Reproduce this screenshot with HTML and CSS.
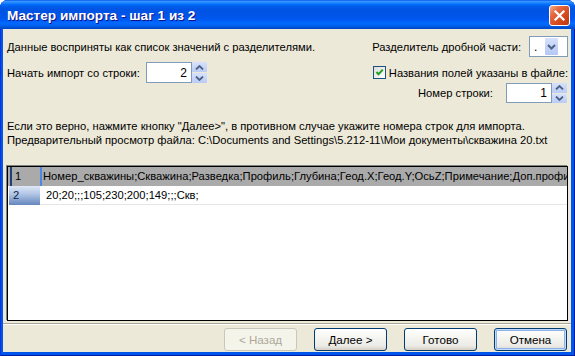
FILE: index.html
```html
<!DOCTYPE html>
<html lang="ru">

<head>
    <meta charset="UTF-8">
    <meta name="viewport" content="width=device-width, initial-scale=1.0">
    <title>Мастер импорта - шаг 1 из 2</title>
    <link rel="stylesheet" href="styles.css">
</head>

<body>
    <div class="window">
        <div class="titlebar">
            <span class="title">Мастер импорта - шаг 1 из 2</span>
            <button class="close" title="Закрыть">
                <svg width="19" height="19" viewBox="0 0 19 19">
                    <path d="M5.5 5.5 L13.5 13.5 M13.5 5.5 L5.5 13.5" stroke="#fff" stroke-width="2.2" stroke-linecap="square" fill="none"/>
                </svg>
            </button>
        </div>

        <div class="client">
            <div class="options">
                <div class="col-left">
                    <div class="row row-top">Данные восприняты как список значений с разделителями.</div>
                    <div class="row row-start">
                        <span class="start-label">Начать импорт со строки:</span>
                        <div class="spin">
                            <div class="spin-box">2</div>
                            <div class="spin-btns">
                                <span class="spin-btn"><svg width="9" height="5" viewBox="0 0 9 5"><path d="M1 4.5 L4.5 1 L8 4.5" stroke="#4d6185" stroke-width="1.8" fill="none"/></svg></span>
                                <span class="spin-btn"><svg width="9" height="5" viewBox="0 0 9 5"><path d="M1 0.5 L4.5 4 L8 0.5" stroke="#4d6185" stroke-width="1.8" fill="none"/></svg></span>
                            </div>
                        </div>
                    </div>
                </div>

                <div class="col-right">
                    <div class="row row-top">
                        <span>Разделитель дробной части:</span>
                        <div class="combo">
                            <span class="combo-value">.</span>
                            <span class="combo-btn"><svg width="9" height="6" viewBox="0 0 9 6"><path d="M1 1 L4.5 4.5 L8 1" stroke="#4d6185" stroke-width="2" fill="none"/></svg></span>
                        </div>
                    </div>
                    <label class="row row-check">
                        <span class="checkbox"><svg width="11" height="11" viewBox="0 0 11 11"><path d="M2.5 5 L4.5 7.3 L8.8 2.6" stroke="#21a121" stroke-width="2" fill="none"/></svg></span>
                        Названия полей указаны в файле:
                    </label>
                    <div class="row row-line">
                        <span class="line-label">Номер строки:</span>
                        <div class="spin spin-small">
                            <div class="spin-box">1</div>
                            <div class="spin-btns">
                                <span class="spin-btn"><svg width="9" height="5" viewBox="0 0 9 5"><path d="M1 4.5 L4.5 1 L8 4.5" stroke="#4d6185" stroke-width="1.8" fill="none"/></svg></span>
                                <span class="spin-btn"><svg width="9" height="5" viewBox="0 0 9 5"><path d="M1 0.5 L4.5 4 L8 0.5" stroke="#4d6185" stroke-width="1.8" fill="none"/></svg></span>
                            </div>
                        </div>
                    </div>
                </div>
            </div>

            <div class="hint">
                <p>Если это верно, нажмите кнопку "Далее&gt;", в противном случае укажите номера строк для импорта.</p>
                <p>Предварительный просмотр файла: C:\Documents and Settings\5.212-11\Мои документы\скважина 20.txt</p>
            </div>

            <div class="preview">
                <div class="grid-row grid-row-fields">
                    <div class="row-head">1</div>
                    <div class="row-data">Номер_скважины;Скважина;Разведка;Профиль;Глубина;Геод.X;Геод.Y;ОсьZ;Примечание;Доп.профиль</div>
                </div>
                <div class="grid-row grid-row-current">
                    <div class="row-head">2</div>
                    <div class="row-data">20;20;;;105;230;200;149;;;Скв;</div>
                </div>
            </div>

            <div class="separator"></div>

            <div class="buttons">
                <button class="btn" disabled>&lt; Назад</button>
                <button class="btn">Далее &gt;</button>
                <button class="btn">Готово</button>
                <button class="btn btn-default">Отмена</button>
            </div>
        </div>
    </div>
</body>

</html>
```

FILE: styles.css
```css
body {
    margin: 0;
    background-color: #fff;
    font-family: "Liberation Sans", Arial, sans-serif;
    font-size: 11.2px;
    color: #000;
}

.window {
    width: 575px;
    height: 356px;
    display: flex;
    flex-direction: column;
    background-color: #0055ea;
    border-radius: 8px 8px 0 0;
    box-shadow: inset 1px 0 #0831d9, inset 0 -1px #001ea0, inset -1px 0 #001ea0;
    overflow: hidden;
}

.titlebar {
    height: 29px;
    flex: none;
    display: flex;
    justify-content: space-between;
    padding: 0 5px 0 7px;
    background: linear-gradient(to bottom, #0058ee 0%, #3a93ff 5%, #288eff 8%, #127dff 12%, #036ffc 15%, #0262ee 20%, #0057e5 28%, #0054e3 35%, #0055eb 60%, #005bf5 70%, #026afe 80%, #0062ef 88%, #0052d6 94%, #0046c8 100%);
}

.title {
    align-self: center;
    margin-top: 1px;
    color: #fff;
    font-weight: bold;
    font-size: 13.6px;
    text-shadow: 1px 1px #0f1089;
}

.close {
    width: 21px;
    height: 21px;
    margin-top: 5px;
    padding: 0;
    border: 1px solid #fff;
    border-radius: 3px;
    background: linear-gradient(135deg, #f3ab90 0%, #e5683f 30%, #d4481f 65%, #c0360f 100%);
    display: flex;
    align-items: center;
    justify-content: center;
}

.client {
    flex: 1;
    margin: 0 4px 4px 3px;
    background-color: #ece9d8;
    display: flex;
    flex-direction: column;
}

.options {
    display: flex;
    justify-content: space-between;
    padding: 7px 3px 0 4px;
}

.row {
    display: flex;
    align-items: center;
}

.row-top {
    height: 21px;
}

.col-right {
    display: flex;
    flex-direction: column;
    align-items: flex-end;
}

.col-right .row-top span {
    margin-right: 8px;
}

.row-start {
    margin-top: 5px;
    height: 21px;
}

.start-label {
    width: 139px;
}

.row-check {
    margin-top: 9px;
    height: 13px;
}

.checkbox {
    width: 13px;
    height: 13px;
    box-sizing: border-box;
    margin-right: 3px;
    border: 1px solid #1c5180;
    background: linear-gradient(135deg, #dcdcd7, #fff);
    display: flex;
    align-items: center;
    justify-content: center;
}

.row-line {
    margin-top: 4px;
    height: 20px;
}

.line-label {
    width: 88px;
}

.spin {
    display: flex;
    height: 21px;
}

.spin-small {
    height: 20px;
    margin-right: 1px;
}

.spin-box {
    width: 46px;
    box-sizing: border-box;
    border: 1px solid #7f9db9;
    background-color: #fff;
    padding-right: 4px;
    display: flex;
    align-items: center;
    justify-content: flex-end;
    font-size: 12px;
}

.spin-btns {
    width: 15px;
    display: flex;
    flex-direction: column;
    gap: 1px;
    background-color: #ece9d8;
}

.spin-btn {
    flex: 1;
    display: flex;
    align-items: center;
    justify-content: center;
    background: linear-gradient(to bottom, #d6e1fb, #b9cbf6);
    border-radius: 1px;
}

.combo {
    width: 39px;
    height: 21px;
    box-sizing: border-box;
    border: 1px solid #7f9db9;
    background-color: #fff;
    display: flex;
    align-items: center;
    justify-content: space-between;
    padding: 1px;
}

.combo-value {
    padding-left: 3px;
    font-size: 12px;
}

.combo-btn {
    width: 17px;
    height: 17px;
    display: flex;
    align-items: center;
    justify-content: center;
    background: linear-gradient(to bottom, #d6e1fb, #b4c8f6);
    border-radius: 1px;
}

.hint {
    margin-top: 16px;
    padding-left: 4px;
}

.hint p {
    margin: 0;
    line-height: 14px;
}

.preview {
    margin: 19px 3px 0 4px;
    height: 155px;
    box-sizing: border-box;
    border: 1px solid #000;
    box-shadow: -1px -1px 0 #808080;
    background-color: #fff;
    overflow: hidden;
}

.grid-row {
    display: flex;
    height: 19px;
}

.row-head {
    width: 32px;
    flex: none;
    box-sizing: border-box;
    padding-left: 5px;
    line-height: 19px;
}

.row-data {
    flex: 1;
    white-space: nowrap;
    overflow: hidden;
    line-height: 19px;
}

.grid-row-fields {
    background-color: #aaa;
}

.grid-row-fields .row-head {
    border-left: 2px solid #1f3f7a;
    margin-left: 2px;
    width: 30px;
    padding-left: 3px;
}

.grid-row-fields .row-data {
    border-left: 2px solid #4a87e8;
    padding-left: 1px;
}

.grid-row-current .row-head {
    margin-left: 1px;
    width: 31px;
    padding-left: 4px;
    background: linear-gradient(to bottom, #dfe8f6, #aec3e4 45%, #6585bd);
    color: #0a1f44;
}

.grid-row-current .row-data {
    padding-left: 6px;
    border-bottom: 1px solid #e6e6e6;
}

.separator {
    margin-top: 2px;
    height: 1px;
    border-top: 1px solid #aca899;
    background-color: #fff;
}

.buttons {
    margin-top: 3px;
    display: flex;
    justify-content: flex-end;
    gap: 17px;
    padding-right: 4px;
}

.btn {
    width: 73px;
    height: 23px;
    padding: 0;
    border: 1px solid #003c74;
    border-radius: 3px;
    background: linear-gradient(to bottom, #fff 0%, #f5f5f1 40%, #ecebe6 80%, #d6d0c5 100%);
    font-family: inherit;
    font-size: 11.6px;
    color: #000;
}

.btn:disabled {
    border-color: #c9c7ba;
    background: #f5f4ea;
    color: #aca899;
}

.btn-default {
    box-shadow: inset 0 0 0 1px #c4daf9, inset 0 0 0 2px #8db2ea;
}
```
